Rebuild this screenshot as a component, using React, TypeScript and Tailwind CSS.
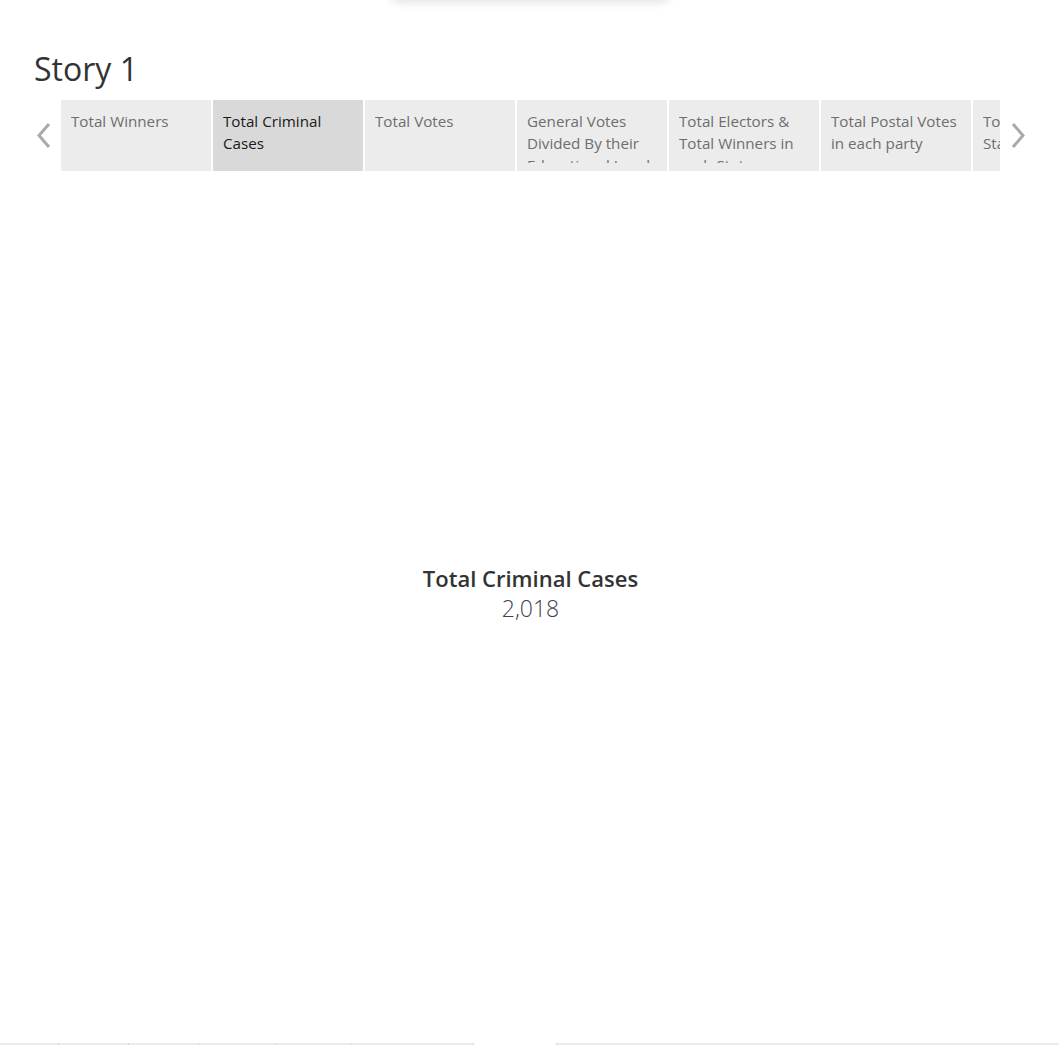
import React from "react";

const tabs = [
  "Total Winners",
  "Total Criminal Cases",
  "Total Votes",
  "General Votes Divided By their Educational Level",
  "Total Electors & Total Winners in each State",
  "Total Postal Votes in each party",
  "Total Winners per State",
];

export default function App() {
  return (
    <div
      className="relative w-[1059px] h-[1045px] bg-white overflow-hidden text-[#333]"
      style={{ fontFamily: '"Open Sans", "Noto Sans", sans-serif' }}
    >
      <div className="absolute left-[390px] top-[-30px] w-[280px] h-[30px] bg-white shadow-[0_2px_10px_rgba(0,0,0,0.12)] rounded-b-lg" />

      <div className="pt-[48px] pl-[34px]">
        <h1 className="text-[32px] leading-[42px] text-[#333] font-normal">Story 1</h1>
      </div>

      <div className="mt-[10px] flex items-stretch h-[71px]">
        <div className="w-[61px] flex items-center justify-end pr-[9px]">
          <svg width="16" height="27" viewBox="0 0 16 27">
            <path d="M13 2 L3 13.5 L13 25" fill="none" stroke="#aaaaaa" strokeWidth="3" />
          </svg>
        </div>
        <div className="w-[939px] overflow-hidden flex gap-[2px]">
          {tabs.map((t, i) => (
            <div
              key={i}
              className={
                "shrink-0 w-[150px] h-[71px] pt-[10px] pl-[10px] pr-[6px] pb-[8px] " +
                (i === 1 ? "bg-[#d9d9d9] text-[#1a1a1a]" : "bg-[#ececec] text-[#6e6e6e]")
              }
            >
              <div className="h-[53px] overflow-hidden text-[15.2px] leading-[22px]">{t}</div>
            </div>
          ))}
        </div>
        <div className="w-[35px] flex items-center pl-[10px]">
          <svg width="16" height="27" viewBox="0 0 16 27">
            <path d="M3 2 L13 13.5 L3 25" fill="none" stroke="#aaaaaa" strokeWidth="3" />
          </svg>
        </div>
      </div>

      <div className="mt-[392px] flex flex-col items-center pl-[2px]">
        <div className="text-[22px] leading-[30px] font-semibold text-[#333]">Total Criminal Cases</div>
        <div className="text-[23px] leading-[30px] text-[#3c4350] font-light">2,018</div>
      </div>

      <div className="absolute left-0 right-0 bottom-0 h-[2px] flex">
        <div className="w-[474px] h-full bg-[#ececec] flex">
          <div className="w-[59px] border-r border-[#d5d5d5]" />
          <div className="w-[70px] border-r border-[#d5d5d5]" />
          <div className="w-[70px] border-r border-[#d5d5d5]" />
          <div className="w-[78px] border-r border-[#d5d5d5]" />
          <div className="w-[74px] border-r border-[#d5d5d5]" />
          <div className="flex-1 border-r border-[#d5d5d5]" />
        </div>
        <div className="w-[82px]" />
        <div className="flex-1 h-full bg-[#ececec] border-l border-[#d5d5d5]" />
      </div>
    </div>
  );
}
